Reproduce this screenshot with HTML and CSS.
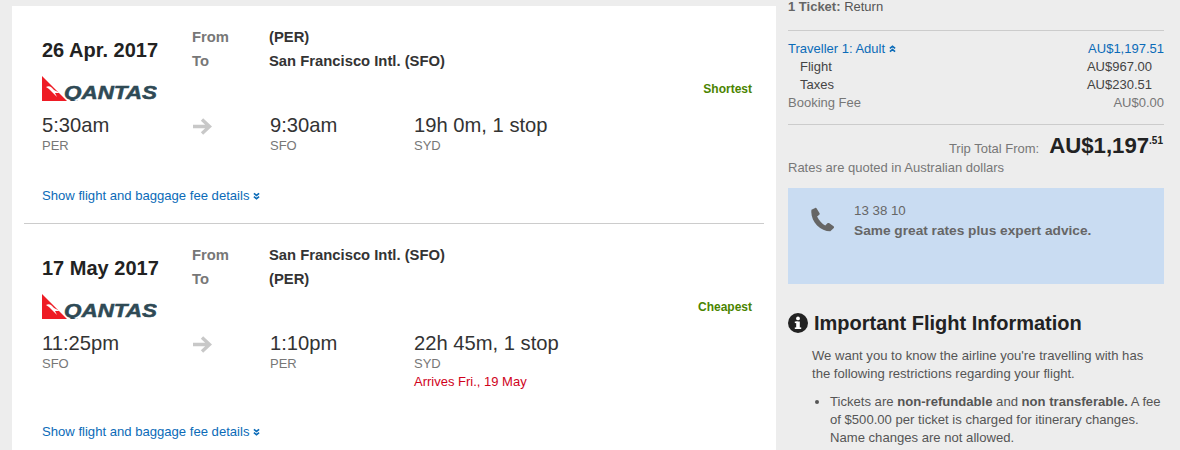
FILE: index.html
```html
<!DOCTYPE html>
<html lang="en">
<head>
<meta charset="utf-8">
<title>Flight summary</title>
<link rel="stylesheet" href="styles.css">
</head>
<body>
<div class="page">
  <main class="card">
    <section class="flight">
      <div class="head">
        <div class="brand">
          <div class="date">26 Apr. 2017</div>
          <svg class="logo" viewBox="0 0 115 25" width="115" height="25">
            <polygon points="0,0 25,25 0,25" fill="#ee1c25"/>
            <path d="M4 11 C8 9 10 12 12 14 L18 17 L13 17 L15 21 L11 17 L7 13 Z" fill="#fff"/>
            <text x="22" y="22.5" class="logo-text" textLength="93" lengthAdjust="spacingAndGlyphs">QANTAS</text>
          </svg>
        </div>
        <div class="route">
          <div class="route-row"><span class="label">From</span><span class="place">(PER)</span></div>
          <div class="route-row"><span class="label">To</span><span class="place">San Francisco Intl. (SFO)</span></div>
          <div class="tag">Shortest</div>
        </div>
      </div>
      <div class="times">
        <div class="time-col dep"><div class="time">5:30am</div><div class="code">PER</div></div>
        <div class="arrow-col"><svg viewBox="0 0 20 17" width="20" height="17"><path d="M1 8.5H17M10 1.5L17.5 8.5L10 15.5" fill="none" stroke="#c8c8c8" stroke-width="3.4"/></svg></div>
        <div class="time-col arr"><div class="time">9:30am</div><div class="code">SFO</div></div>
        <div class="time-col"><div class="time">19h 0m, 1 stop</div><div class="code">SYD</div></div>
      </div>
      <a class="details details-one">Show flight and baggage fee details <svg class="chev" viewBox="0 0 8 8" width="7" height="8"><path d="M1 1L4 3.4L7 1M1 4.6L4 7L7 4.6" fill="none" stroke="#0b6bb8" stroke-width="1.8"/></svg></a>
    </section>
    <section class="flight second">
      <div class="head">
        <div class="brand">
          <div class="date">17 May 2017</div>
          <svg class="logo" viewBox="0 0 115 25" width="115" height="25">
            <polygon points="0,0 25,25 0,25" fill="#ee1c25"/>
            <path d="M4 11 C8 9 10 12 12 14 L18 17 L13 17 L15 21 L11 17 L7 13 Z" fill="#fff"/>
            <text x="22" y="22.5" class="logo-text" textLength="93" lengthAdjust="spacingAndGlyphs">QANTAS</text>
          </svg>
        </div>
        <div class="route">
          <div class="route-row"><span class="label">From</span><span class="place">San Francisco Intl. (SFO)</span></div>
          <div class="route-row"><span class="label">To</span><span class="place">(PER)</span></div>
          <div class="tag">Cheapest</div>
        </div>
      </div>
      <div class="times">
        <div class="time-col dep"><div class="time">11:25pm</div><div class="code">SFO</div></div>
        <div class="arrow-col"><svg viewBox="0 0 20 17" width="20" height="17"><path d="M1 8.5H17M10 1.5L17.5 8.5L10 15.5" fill="none" stroke="#c8c8c8" stroke-width="3.4"/></svg></div>
        <div class="time-col arr"><div class="time">1:10pm</div><div class="code">PER</div></div>
        <div class="time-col"><div class="time">22h 45m, 1 stop</div><div class="code">SYD</div><div class="warn">Arrives Fri., 19 May</div></div>
      </div>
      <a class="details details-two">Show flight and baggage fee details <svg class="chev" viewBox="0 0 8 8" width="7" height="8"><path d="M1 1L4 3.4L7 1M1 4.6L4 7L7 4.6" fill="none" stroke="#0b6bb8" stroke-width="1.8"/></svg></a>
    </section>
  </main>
  <aside class="side">
    <div class="ticket"><b>1 Ticket:</b> Return</div>
    <div class="costs">
      <div class="row link"><span>Traveller 1: Adult <svg class="chev" viewBox="0 0 8 8" width="7" height="8"><path d="M1 3.4L4 1L7 3.4M1 7L4 4.6L7 7" fill="none" stroke="#0b6bb8" stroke-width="1.8"/></svg></span><span>AU$1,197.51</span></div>
      <div class="row sub"><span>Flight</span><span>AU$967.00</span></div>
      <div class="row sub"><span>Taxes</span><span>AU$230.51</span></div>
      <div class="row fee"><span>Booking Fee</span><span>AU$0.00</span></div>
    </div>
    <div class="total"><span class="total-label">Trip Total From:</span><span class="total-num">AU$1,197<sup>.51</sup></span></div>
    <div class="note">Rates are quoted in Australian dollars</div>
    <div class="call">
      <svg class="phone" viewBox="0 0 24 24" width="26" height="26"><path d="M6.6 1.8L3.2 3.4C2.4 8.5 4.6 14 8.4 18C12 21.5 16.5 23.5 20.6 23.4L23.8 20.2C24.2 19.7 24 19.2 23.6 18.8L19.4 15.8C18.9 15.5 18.4 15.6 18 16L15.9 18C13 16.5 10 13 8.4 9.6L10.4 8C10.8 7.6 10.9 7.1 10.7 6.6L8 2.2C7.7 1.7 7.1 1.6 6.6 1.8Z" fill="#666"/></svg>
      <div><div class="call-num">13 38 10</div><div class="call-msg">Same great rates plus expert advice.</div></div>
    </div>
    <h2 class="info-title"><svg viewBox="0 0 20 20" width="20" height="20"><circle cx="10" cy="10" r="10" fill="#222"/><rect x="8.2" y="8.5" width="3.6" height="7.5" fill="#fff"/><rect x="6.8" y="8.5" width="3" height="1.6" fill="#fff"/><rect x="6.8" y="14.4" width="6.4" height="1.6" fill="#fff"/><circle cx="10" cy="5.4" r="1.9" fill="#fff"/></svg>Important Flight Information</h2>
    <div class="info-body">
      <p>We want you to know the airline you're travelling with has the following restrictions regarding your flight.</p>
      <ul><li>Tickets are <b>non-refundable</b> and <b>non transferable.</b> <span>A fee</span> <span>of $500.00 per ticket is charged for itinerary changes. Name changes are not allowed.</span></li></ul>
    </div>
  </aside>
</div>
</body>
</html>
```
FILE: styles.css
```css
* { box-sizing: border-box; }
html, body { margin: 0; height: 450px; overflow: hidden; }
body { background: #ededed; font-family: "Liberation Sans", Arial, sans-serif; color: #555; }
.page { display: flex; height: 450px; padding-left: 12px; }
.card { width: 764px; margin-top: 6px; background: #fff; padding: 0 12px; flex: none; height: 444px; }
.flight { padding: 14px 12px 0 18px; height: 218px; border-bottom: 1px solid #ccc; }
.flight.second { border-bottom: 0; height: 226px; }
.head { display: flex; height: 93px; }
.brand { width: 150px; flex: none; padding-top: 18px; }
.date { font-size: 20px; line-height: 24px; font-weight: bold; color: #222; white-space: nowrap; }
.logo { display: block; margin-top: 14px; }
.logo-text { font-family: "Liberation Sans", Arial, sans-serif; font-size: 18px; font-weight: bold; font-style: italic; fill: #2f4a55; stroke: #2f4a55; stroke-width: .5px; }
.route { padding-top: 5px; flex: 1; }
.route-row { display: flex; height: 24px; line-height: 24px; font-size: 14.8px; font-weight: bold; }
.label { width: 77px; color: #777; }
.place { color: #333; }
.tag { text-align: right; font-size: 12px; font-weight: bold; line-height: 16px; margin-top: 8px; color: #4a8400; }
.times { display: flex; }
.time-col { flex: none; }
.dep { width: 150px; }
.arrow-col { width: 78px; flex: none; padding-top: 5px; }
.arrow-col svg { display: block; }
.arr { width: 144px; }
.time { font-size: 20.2px; line-height: 24px; color: #333; white-space: nowrap; }
.code { font-size: 13px; line-height: 16px; margin-top: 1px; color: #777; }
.warn { font-size: 13px; line-height: 17px; color: #d0021b; margin-top: 1px; }
.details { display: block; font-size: 13.1px; line-height: 16px; color: #0b6bb8; white-space: nowrap; }
.details-one { margin-top: 34px; }
.details-two { margin-top: 34px; }
.chev { display: inline-block; vertical-align: 0; }
.side { width: 376px; margin-left: 12px; flex: none; font-size: 13px; line-height: 18px; }
.ticket { height: 31px; line-height: 14px; border-bottom: 1px solid #ccc; }
.ticket b { color: #666; }
.costs { padding: 9px 0 12px; border-bottom: 1px solid #ccc; }
.row { display: flex; justify-content: space-between; height: 18px; }
.link { color: #0b6bb8; }
.sub { color: #444; padding: 0 12px; }
.fee { color: #777; }
.total { display: flex; justify-content: flex-end; align-items: baseline; margin-top: 8px; height: 25px; padding-right: 1px; }
.total-label { margin-right: 10px; color: #777; }
.total-num { font-size: 22.2px; font-weight: bold; color: #222; line-height: 26px; }
.total-num sup { font-size: 10px; line-height: 0; vertical-align: 9px; }
.note { color: #777; margin-top: 1px; }
.call { margin-top: 11px; height: 96px; background: #c9dcf2; padding: 14px 20px; display: flex; gap: 20px; align-items: flex-start; }
.phone { margin-top: 4px; flex: none; }
.call-num { line-height: 18px; color: #666; font-size: 13.3px; }
.call-msg { line-height: 22px; font-weight: bold; color: #666; font-size: 13.7px; }
.info-title { display: flex; align-items: center; gap: 6px; margin: 27px 0 0; font-size: 20px; line-height: 24px; font-weight: bold; color: #222; }
.info-body { padding-left: 24px; color: #555; font-size: 13.1px; line-height: 18px; margin-top: 12px; }
.info-body p { margin: 0 0 10px; width: 340px; }
.info-body ul { margin: 0; padding-left: 18px; }
```
